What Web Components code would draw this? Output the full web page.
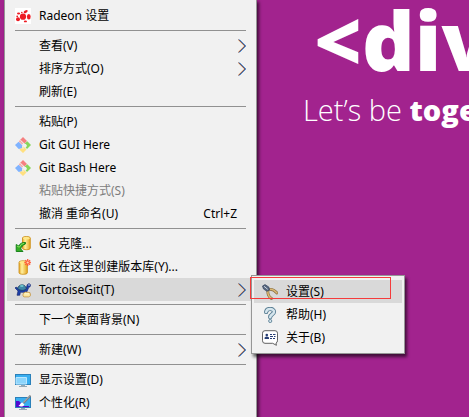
<!DOCTYPE html>
<html lang="zh-CN">
<head>
<meta charset="utf-8">
<title>Desktop</title>
<style>
html, body { margin: 0; height: 100%; overflow: hidden; }
body { font: 12px/23px "Noto Sans", "Noto Sans CJK SC", sans-serif; color: #000; }
b { font-weight: 800; }
</style>
</head>
<body>
<desktop-wallpaper>
  <span slot="title">&lt;div</span>
  <span slot="tagline">Let’s be <b>together</b></span>
  <context-menu class="main">
    <menu-item icon="radeon">Radeon 设置</menu-item>
    <menu-line></menu-line>
    <menu-item arrow>查看(V)</menu-item>
    <menu-item arrow>排序方式(O)</menu-item>
    <menu-item>刷新(E)</menu-item>
    <menu-line></menu-line>
    <menu-item>粘贴(P)</menu-item>
    <menu-item icon="git">Git GUI Here</menu-item>
    <menu-item icon="git">Git Bash Here</menu-item>
    <menu-item disabled>粘贴快捷方式(S)</menu-item>
    <menu-item shortcut="Ctrl+Z">撤消 重命名(U)</menu-item>
    <menu-line></menu-line>
    <menu-item icon="clone">Git 克隆...</menu-item>
    <menu-item icon="create">Git 在这里创建版本库(Y)...</menu-item>
    <menu-item icon="tortoise" arrow active>TortoiseGit(T)
      <context-menu class="sub" slot="submenu">
        <menu-item icon="pliers" active>设置(S)</menu-item>
        <menu-item icon="help">帮助(H)</menu-item>
        <menu-item icon="about">关于(B)</menu-item>
        <focus-mark slot="mark"></focus-mark>
      </context-menu>
    </menu-item>
    <menu-line></menu-line>
    <menu-item>下一个桌面背景(N)</menu-item>
    <menu-line></menu-line>
    <menu-item arrow>新建(W)</menu-item>
    <menu-line></menu-line>
    <menu-item icon="display">显示设置(D)</menu-item>
    <menu-item icon="personal">个性化(R)</menu-item>
  </context-menu>
</desktop-wallpaper>
<script>
const ICONS = {
  radeon: `<path fill="#fff" d="M0 0h16v16H0z"/><g fill="#ed1c24"><circle cx="8" cy="8.7" r="3.1"/><ellipse cx="13.8" cy="8.7" rx="1.9" ry="2.7"/><circle cx="3" cy="11.2" r="2"/><ellipse cx="3.6" cy="5.5" rx="1.6" ry="1.1"/><ellipse cx="10.7" cy="3.6" rx="2.2" ry="1.2" transform="rotate(-30 10.7 3.6)"/><ellipse cx="10.4" cy="13.4" rx="1.6" ry=".9"/><circle cx="2.2" cy="8.3" r=".9"/><circle cx="6.8" cy="4.5" r=".8"/></g>`,
  git: `<path fill="#f58080" d="M8 0l4 4-2.5 2.5L6.3 3.6 5 3z"/><path fill="#f58080" d="M4.7 3.3l3.5 3.2-1.2 1.2-3-3z"/><path fill="#80b3ff" d="M3.6 4.7l3.5 3.5v3L3.7 12 0 8z"/><path fill="#87d65a" d="M12.3 4.2L16 8l-4 4-1.4-1.7L12 9l-1-2-1.6-.2z"/><path fill="#ffe080" d="M8 9.2l1.3 1 2.2 2.4L8 16l-3.7-3.5L7 11z"/><path stroke="#f1f1f1" stroke-width=".8" fill="none" d="M4.5 4.2L8 7.5V12M8 7l3.5 2"/>`,
  clone: `<defs><linearGradient id="g"><stop stop-color="#e8a827"/><stop offset=".35" stop-color="#fff0a0"/><stop offset="1" stop-color="#e4a31c"/></linearGradient></defs><path fill="url(#g)" stroke="#c98b12" stroke-width=".8" d="M7.5 2c0-2 7.8-2 7.8 0v10.2c0 2-7.8 2-7.8 0z"/><ellipse cx="11.4" cy="2.2" rx="3.4" ry="1.2" fill="#ffe88a"/><path fill="#35ae25" stroke="#0d7a12" stroke-width=".9" d="M10.5 6.5C7 6.3 5 7.5 3.8 10L1.2 8.5v7H8l-2.3-2.6c.6-2 2-4 4.8-5z"/><path stroke="#8be15e" fill="none" d="M9 7.3Q6 7.5 4.3 11.2L2 10"/>`,
  create: `<defs><linearGradient id="g"><stop stop-color="#e8a827"/><stop offset=".35" stop-color="#fff0a0"/><stop offset="1" stop-color="#e4a31c"/></linearGradient></defs><path fill="url(#g)" stroke="#c98b12" stroke-width=".8" d="M4 3.3c0-2 8.4-2 8.4 0v10.5c0 2-8.4 2-8.4 0z"/><ellipse cx="8.2" cy="3.4" rx="3.7" ry="1.2" fill="#ffe88a"/><path stroke="#ff5a38" stroke-width="1.3" d="M12.7 0v7M9.3 3.5h6.6M10.3 1.1l4.8 4.8M15.1 1.1l-4.8 4.8"/><circle cx="12.7" cy="3.5" r="1.1" fill="#ffd5b0"/>`,
  tortoise: `<path fill="#1c3fa8" stroke="#14246c" stroke-width=".6" d="M1 5l2.5 1.5L11 7l1.2-4.3c1-1.7 3.5-1 3.4.7-.1 1.4-1.2 1.6-1.9 2.2L12 9.5l-1 1.8-2-1H5.5l-.8 3H2l1-4.3L0 6z"/><path fill="#3f86a8" stroke="#193c5e" stroke-width=".8" d="M2.7 6.5C3.5 2.3 9.5.9 11.4 6.3 10 9 5 9 2.7 6.5z"/><path fill="#6bc1c9" d="M5 3.6l2-1 1.8.8L8 5H5.6z"/><circle cx="14" cy="3" r=".7" fill="#fff"/><path fill="#fbe6a0" stroke="#bd8b3b" stroke-width=".7" d="M8 11.7l2.2-1.7 4.8.6.7 3-2 1.3H9L8 14z"/><path stroke="#fff8cf" d="M9.5 11.8h4.5"/>`,
  display: `<path fill="#2b80b9" d="M0 2h16v11H0z"/><path fill="#38aef0" d="M1 3h14v9H1z"/><path fill="#8bd4fb" stroke="#b9e7ff" d="M1 5.5h10.5V12H1z"/><path fill="#93a9b6" d="M6 13h4v1h2v1H4v-1h2z"/>`,
  personal: `<path fill="#2b80b9" d="M0 2h16v11H0z"/><path fill="#38aef0" d="M1 3h14v9H1z"/><path fill="#5209cf" d="M1 6h3l2 2-2 3h10v1H1z"/><path fill="#93a9b6" d="M6 13h4v1h2v1H4v-1h2z"/><path fill="#fff" d="M3.5 10.5c2 0 1.6-3 3.8-3l2 2c-.5 2.2-4 2.8-5.8 1z"/><path stroke="#7b8288" stroke-width="2" d="M8.5 8L15.5.6"/><path stroke="#c7cacc" stroke-width=".7" d="M8 7.7L15 .5"/>`,
  pliers: `<path fill="none" stroke="#846a3c" stroke-width="2.8" stroke-linecap="round" d="M6 6c-.5 3 0 6.2 3.5 8.5M7 5.5c3.5-1 5.7 1 8 3.5"/><path fill="none" stroke="#dab875" stroke-width="1.5" stroke-linecap="round" d="M6 6c-.5 3 0 6.2 3.5 8.5M7 5.5c3.5-1 5.7 1 8 3.5"/><path fill="#58677e" stroke="#34445d" stroke-width=".7" d="M.5 2L3 .6 6.8 3l.8 3L5 7.3 1.5 5z"/><path stroke="#cbd5e2" d="M2 2.3l3.7 3"/>`,
  help: `<path fill="none" stroke="#52788e" stroke-width="4.2" stroke-linecap="round" stroke-linejoin="round" d="M4.2 5C4.5 1 12 1 12 4.8 12 7.5 8.2 7.2 8.2 10.2"/><path fill="none" stroke="#d5e5ed" stroke-width="2.5" stroke-linecap="round" stroke-linejoin="round" d="M4.2 5C4.5 1 12 1 12 4.8 12 7.5 8.2 7.2 8.2 10.2"/><circle cx="8.2" cy="14" r="1.6" fill="#d5e5ed" stroke="#52788e" stroke-width=".8"/>`,
  about: `<path fill="#fff" stroke="#626262" d="M3 .7h10q2.5 0 2.5 2.5v7q0 2.5-1.5 2.8l.4 2.3-3.7-2H3Q.5 13.3.5 10.8V3.2Q.5.7 3 .7z"/><g fill="#263d74"><circle cx="4.8" cy="5" r="1.3"/><path d="M2.6 9V7.6q2.2-2 4.4 0V9zM8 4h2v1H8zM11 4h2.5v1H11zM8 6h3v1H8zM12 6h1.5v1H12zM8 8h2v1H8zM11 8h2v1h-2z"/></g>`
};

class DesktopWallpaper extends HTMLElement {
  constructor() {
    super();
    this.attachShadow({ mode: "open" }).innerHTML = `<style>
      :host { display: block; position: relative; height: 100vh; overflow: hidden; background: #a2238e; }
      header { padding-left: 303px; color: #fff; white-space: nowrap; font-family: "Open Sans", sans-serif; }
      h1 { margin: 0; padding-left: 11px; font-size: 82px; line-height: 78px; font-weight: 800; }
      p { margin: 0; padding-top: 12px; font-size: 29px; line-height: 40px; font-weight: 300; }
    </style>
    <header><h1><slot name="title"></slot></h1><p><slot name="tagline"></slot></p></header>
    <slot></slot>`;
  }
}

class ContextMenu extends HTMLElement {
  constructor() {
    super();
    this.attachShadow({ mode: "open" }).innerHTML = `<style>
      :host { display: flex; flex-direction: column; position: absolute; box-sizing: border-box; background: #f1f1f1; border: 1px solid #969696; padding: 4px 2px; box-shadow: 2px 3px 3px rgba(0,0,0,.6); }
      :host(.main) { left: 4px; top: -1px; min-width: 253px; }
      :host(.sub) { left: calc(100% - 3px); top: -3px; min-width: 154px; z-index: 1; }
    </style><slot></slot><slot name="mark"></slot>`;
    this.setAttribute("role", "menu");
  }
}

class MenuLine extends HTMLElement {
  constructor() {
    super();
    this.attachShadow({ mode: "open" }).innerHTML = `<style>
      :host { display: block; padding: 3px 8px; }
      hr { margin: 0; border: 0; height: 1px; background: #919191; }
    </style><hr>`;
  }
}

class MenuItem extends HTMLElement {
  constructor() {
    super();
    const icon = ICONS[this.getAttribute("icon")];
    const shortcut = this.getAttribute("shortcut");
    const svg = icon ? `<svg viewBox="0 0 16 16" aria-hidden="true">${icon}</svg>` : "";
    const arrow = this.hasAttribute("arrow") ? `<svg class="arrow" viewBox="0 0 8 14" aria-hidden="true" fill="none"><path stroke="#e0a060" d="M0 .5l6.5 6.5L0 13.5"/><path stroke="#58a8f0" d="M1.5 .5L8 7l-6.5 6.5"/><path stroke="#3a1838" stroke-width=".8" d="M.7 .5l6.5 6.5-6.5 6.5"/></svg>` : "";
    this.attachShadow({ mode: "open" }).innerHTML = `<style>
      :host { display: block; position: relative; }
      :host([active]) { background: #d9d9d9; }
      button { all: unset; box-sizing: border-box; display: flex; align-items: center; width: 100%; height: 23px; padding: 0 8px; white-space: nowrap; }
      button:disabled { color: #7d7d7d; }
      .icon { display: flex; flex: none; width: 24px; }
      svg { width: 16px; height: 16px; }
      .label { flex: 1; height: 23px; }
      .key { padding-right: 9px; }
      .arrow { width: 8px; height: 14px; }
    </style>
    <button type="button" role="menuitem" ${this.hasAttribute("disabled") ? "disabled" : ""}>
      <span class="icon">${svg}</span><span class="label"><slot></slot></span>${shortcut ? `<span class="key">${shortcut}</span>` : ""}${arrow}
    </button><slot name="submenu"></slot>`;
  }
}

class FocusMark extends HTMLElement {
  constructor() {
    super();
    this.attachShadow({ mode: "open" }).innerHTML = `<style>
      :host { position: absolute; left: -2px; right: 13px; top: 1px; height: 20px; border: 1px solid #f43b3b; pointer-events: none; }
    </style>`;
  }
}

customElements.define("desktop-wallpaper", DesktopWallpaper);
customElements.define("context-menu", ContextMenu);
customElements.define("menu-line", MenuLine);
customElements.define("menu-item", MenuItem);
customElements.define("focus-mark", FocusMark);
</script>
</body>
</html>
